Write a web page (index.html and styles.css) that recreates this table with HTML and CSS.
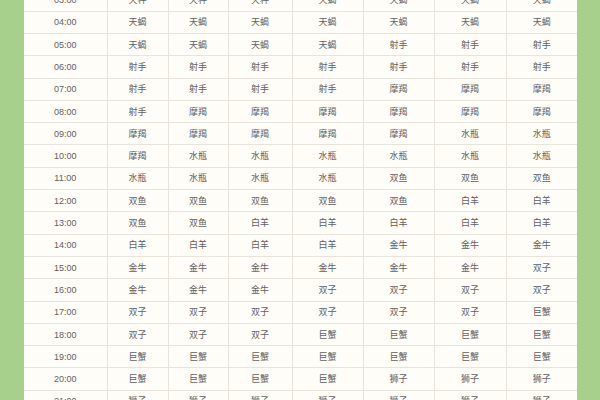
FILE: index.html
```html
<!DOCTYPE html>
<html lang="zh">
<head>
<meta charset="utf-8">
<link rel="stylesheet" href="styles.css">
</head>
<body>
<div class="page">
<table class="asc">
<colgroup>
<col class="c0"><col class="c1"><col class="c2"><col class="c3"><col class="c4"><col class="c5"><col class="c6"><col class="c7">
</colgroup>
<tbody>
<tr><td>03:00</td><td>天秤</td><td>天秤</td><td>天秤</td><td>天蝎</td><td>天蝎</td><td>天蝎</td><td>天蝎</td></tr>
<tr><td>04:00</td><td>天蝎</td><td>天蝎</td><td>天蝎</td><td>天蝎</td><td>天蝎</td><td>天蝎</td><td>天蝎</td></tr>
<tr><td>05:00</td><td>天蝎</td><td>天蝎</td><td>天蝎</td><td>天蝎</td><td>射手</td><td>射手</td><td>射手</td></tr>
<tr><td>06:00</td><td>射手</td><td>射手</td><td>射手</td><td>射手</td><td>射手</td><td>射手</td><td>射手</td></tr>
<tr><td>07:00</td><td>射手</td><td>射手</td><td>射手</td><td>射手</td><td>摩羯</td><td>摩羯</td><td>摩羯</td></tr>
<tr><td>08:00</td><td>射手</td><td>摩羯</td><td>摩羯</td><td>摩羯</td><td>摩羯</td><td>摩羯</td><td>摩羯</td></tr>
<tr><td>09:00</td><td>摩羯</td><td>摩羯</td><td>摩羯</td><td>摩羯</td><td>摩羯</td><td>水瓶</td><td>水瓶</td></tr>
<tr><td>10:00</td><td>摩羯</td><td>水瓶</td><td>水瓶</td><td>水瓶</td><td>水瓶</td><td>水瓶</td><td>水瓶</td></tr>
<tr><td>11:00</td><td>水瓶</td><td>水瓶</td><td>水瓶</td><td>水瓶</td><td>双鱼</td><td>双鱼</td><td>双鱼</td></tr>
<tr><td>12:00</td><td>双鱼</td><td>双鱼</td><td>双鱼</td><td>双鱼</td><td>双鱼</td><td>白羊</td><td>白羊</td></tr>
<tr><td>13:00</td><td>双鱼</td><td>双鱼</td><td>白羊</td><td>白羊</td><td>白羊</td><td>白羊</td><td>白羊</td></tr>
<tr><td>14:00</td><td>白羊</td><td>白羊</td><td>白羊</td><td>白羊</td><td>金牛</td><td>金牛</td><td>金牛</td></tr>
<tr><td>15:00</td><td>金牛</td><td>金牛</td><td>金牛</td><td>金牛</td><td>金牛</td><td>金牛</td><td>双子</td></tr>
<tr><td>16:00</td><td>金牛</td><td>金牛</td><td>金牛</td><td>双子</td><td>双子</td><td>双子</td><td>双子</td></tr>
<tr><td>17:00</td><td>双子</td><td>双子</td><td>双子</td><td>双子</td><td>双子</td><td>双子</td><td>巨蟹</td></tr>
<tr><td>18:00</td><td>双子</td><td>双子</td><td>双子</td><td>巨蟹</td><td>巨蟹</td><td>巨蟹</td><td>巨蟹</td></tr>
<tr><td>19:00</td><td>巨蟹</td><td>巨蟹</td><td>巨蟹</td><td>巨蟹</td><td>巨蟹</td><td>巨蟹</td><td>巨蟹</td></tr>
<tr><td>20:00</td><td>巨蟹</td><td>巨蟹</td><td>巨蟹</td><td>巨蟹</td><td>狮子</td><td>狮子</td><td>狮子</td></tr>
<tr><td>21:00</td><td>狮子</td><td>狮子</td><td>狮子</td><td>狮子</td><td>狮子</td><td>狮子</td><td>狮子</td></tr>
</tbody>
</table>
</div>
</body>
</html>
```
FILE: styles.css
```css
html, body {
  margin: 0;
  padding: 0;
  background: #a8d08d;
  height: 100%;
  overflow: hidden;
}
.page {
  padding: 0 23px 0 24px;
}
.asc {
  width: 553px;
  table-layout: fixed;
  border-collapse: collapse;
  background: #fffdf8;
  margin-top: -11.6px;
  font-family: "Liberation Sans", "Noto Sans CJK SC", sans-serif;
  font-size: 9px;
  color: #606060;
}
.c0 { width: 83px; }
.c1 { width: 61px; }
.c2 { width: 60px; }
.c3 { width: 64px; }
.c4 { width: 71px; }
.c5 { width: 71px; }
.c6 { width: 72px; }
.c7 { width: 71px; }
.asc tr {
  height: 22.3px;
}
.asc td {
  padding: 0;
  border: 1px solid #e8e4dc;
  text-align: center;
  vertical-align: middle;
  line-height: 12px;
}
.asc td:first-child {
  border-left: 0;
}
.asc td:last-child {
  border-right: 0;
}
```
